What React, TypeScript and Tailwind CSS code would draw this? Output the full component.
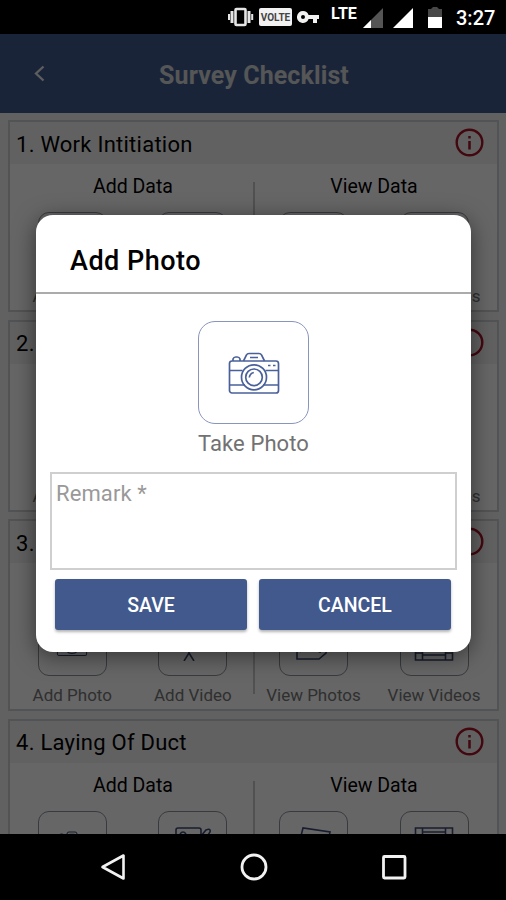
import type { ReactNode } from "react";

const sections = ["Work Intitiation", "Trenching", "Duct Inspection", "Laying Of Duct"];

export default function App() {
  return (
    <div className="flex h-[900px] w-[506px] flex-col overflow-hidden bg-black font-[Roboto,sans-serif]">
      <StatusBar />
      <main className="relative flex h-[800px] shrink-0 flex-col overflow-hidden bg-[#f3f3f3]">
        <Header />
        <div className="flex flex-col gap-[7.6px] pt-[7px] pr-[7px] pl-2">
          {sections.map((title, i) => (
            <SectionCard key={title} index={i + 1} title={title} />
          ))}
        </div>
        {/* Scrim and dialog sit over the list */}
        <div className="absolute inset-0 bg-black/60 pt-[181px] pl-[36px]">
          <PhotoDialog />
        </div>
      </main>
      <NavBar />
    </div>
  );
}

function StatusBar() {
  return (
    <div className="flex h-[34px] shrink-0 items-center bg-black pl-[227px] text-white">
      <svg width="27" height="22" viewBox="0 0 27 22" fill="none" stroke="#e6e6e6">
        <rect x="8.500" y="3" width="10" height="16" rx="1" strokeWidth="2.600" />
        <path d="M5 5v12M22 5v12" strokeWidth="3" />
        <path d="M2 8v6M25.200 8v6" strokeWidth="2" />
      </svg>
      <span className="ml-[5px] flex h-[18px] w-[33px] items-center justify-center rounded-[2px] bg-[#f2f2f2] text-[10px] font-bold text-[#444]">
        VOLTE
      </span>
      <svg className="ml-[5px]" width="24" height="14" viewBox="0 0 24 14" fill="#f2f2f2">
        <path
          fillRule="evenodd"
          d="M6 1a6 6 0 1 0 5.600 8H16v4h4V9h2V5H11.600A6 6 0 0 0 6 1Zm0 4a2 2 0 1 1 0 4 2 2 0 0 1 0-4Z"
        />
      </svg>
      <span className="mb-[7px] ml-[10px] w-[27px] text-[16px] leading-none font-bold">LTE</span>
      <svg className="mt-[3px] ml-[5px]" width="22" height="21" viewBox="0 0 22 21">
        <path d="M0 20 20 0v20Z" fill="#555" />
        <path d="M0 20 8 12v8Z" fill="#fff" />
      </svg>
      <svg className="mt-[3px] ml-[8px]" width="22" height="21" viewBox="0 0 22 21">
        <path d="M0 20 20 0v20Z" fill="#fff" />
      </svg>
      <svg className="ml-[13px]" width="14" height="22" viewBox="0 0 14 22">
        <path d="M0 3h3l2-2h4l2 2h3v9H0Z" fill="#484848" />
        <path d="M0 11h14v11H0Z" fill="#fff" />
      </svg>
      <span className="mt-[2px] ml-[14px] text-[20px] font-medium">3:27</span>
    </div>
  );
}

function Header() {
  return (
    <header className="flex h-[79px] shrink-0 items-center bg-[#435b90] text-[#e8eaea]">
      <svg className="ml-[33px]" width="14" height="18" viewBox="0 0 14 18" fill="none" stroke="currentColor" strokeWidth="2.300">
        <path d="M10.500 1.500 3 8.500l7.500 7" />
      </svg>
      <h1 className="mt-[4px] w-[414px] text-center text-[25px] font-bold tracking-[0.1px] text-[#d4d6d8]">
        Survey Checklist
      </h1>
    </header>
  );
}

function SectionCard({ index, title }: { index: number; title: string }) {
  return (
    <section className="relative h-[192px] shrink-0 border-2 border-[#cdcfd1] bg-white">
      <div className="flex h-[42px] items-center justify-between bg-[#f3f3f3] pr-[13px] pl-[6px]">
        <h2 className="mt-[2px] text-[22px] tracking-[0.25px] text-black">
          {index}. {title}
        </h2>
        <svg width="30" height="30" viewBox="0 0 30 30" fill="none" stroke="#a81226">
          <circle cx="15.500" cy="14.500" r="12.800" strokeWidth="2.400" />
          <path d="M15.500 13v8.500M15.500 8v2.500" strokeWidth="2.500" />
        </svg>
      </div>
      <div className="flex px-[2px]">
        <h3 className="mt-[9px] w-[242px] text-center text-[19.500px] leading-[28px] text-black">Add Data</h3>
        <h3 className="mt-[9px] w-[240px] text-center text-[19.500px] leading-[28px] text-black">View Data</h3>
      </div>
      <div className="mt-[11px] flex pl-[2px]">
        <Tile label="Add Photo">
          <CameraIcon className="h-[25px] w-[32px]" />
        </Tile>
        <Tile label="Add Video">
          <TripodIcon />
        </Tile>
        <Tile label="View Photos">
          <PhotosIcon />
        </Tile>
        <Tile label="View Videos">
          <FilmIcon />
        </Tile>
      </div>
      <div className="absolute top-[60px] left-[243px] h-[113px] w-[2px] bg-[#cbcbcb]" />
    </section>
  );
}

function Tile({ label, children }: { label: string; children: ReactNode }) {
  return (
    <div className="flex w-[120.600px] shrink-0 flex-col items-center">
      <div className="flex h-[65px] w-[69px] items-center justify-center rounded-[11px] border-[1.500px] border-[#8b939d] text-[#3b4a75]">
        {children}
      </div>
      <span className="mt-[7px] text-[17px] leading-[24px] whitespace-nowrap text-[#777]">{label}</span>
    </div>
  );
}

function PhotoDialog() {
  return (
    <div className="flex h-[437px] w-[435px] flex-col rounded-[17px] bg-white shadow-[0_4px_22px_rgba(0,0,0,0.5)]">
      <h2 className="flex h-[79px] shrink-0 items-center border-b-2 border-[#ababab] pt-[15px] pl-[34px] text-[27px] font-medium tracking-[0.5px] text-black">
        Add Photo
      </h2>
      <div className="mt-[27px] flex flex-col items-center">
        <div className="flex h-[103px] w-[111px] items-center justify-center rounded-[17px] border-[1.500px] border-[#8995bd] text-[#4a609a]">
          <CameraIcon className="h-[42px] w-[52px]" />
        </div>
        <span className="mt-[5px] text-[22px] leading-[30px] tracking-[0.1px] text-[#727272]">Take Photo</span>
      </div>
      <div className="mt-[13px] ml-[14px] h-[98px] w-[407px] border-2 border-[#cfcfcf] pt-[6px] pl-[4px] text-[22px] leading-[28px] tracking-[0.1px] text-[#999]">
        Remark *
      </div>
      <div className="mt-[9px] flex gap-3 pl-[19px]">
        <button className="h-[51px] w-[192px] rounded-[3px] bg-[#41598d] pt-[2px] text-[19.500px] font-medium text-white shadow-[0_2px_3px_rgba(0,0,0,0.3)]">
          SAVE
        </button>
        <button className="h-[51px] w-[192px] rounded-[3px] bg-[#41598d] pt-[2px] text-[19.500px] font-medium text-white shadow-[0_2px_3px_rgba(0,0,0,0.3)]">
          CANCEL
        </button>
      </div>
    </div>
  );
}

function CameraIcon({ className }: { className: string }) {
  return (
    <svg className={className} viewBox="0 0 52 42" fill="none" stroke="currentColor" strokeWidth="1.700">
      <rect x="1.500" y="9" width="49" height="32" rx="2.500" />
      <path d="M5 9V7a3 3 0 0 1 3-2h1a3 3 0 0 1 3 2v2M15.500 9l3-6q.7-1.500 2.500-1.500h10q1.800 0 2.500 1.500l3 6" />
      <path d="M22 5.500h8M1.500 18.500h13M37.500 18.500h13M1.500 33h15.500M35 33h15.500M40 13.500h2.500M45 13.500h2.500" />
      <circle cx="26" cy="25.300" r="12.500" />
      <circle cx="26" cy="25.300" r="8.300" />
      <path d="M21.300 25.500q.5-4 4.500-5" />
    </svg>
  );
}

function TripodIcon() {
  return (
    <svg width="40" height="34" viewBox="0 0 40 34" fill="none" stroke="currentColor" strokeWidth="1.600">
      <rect x="3" y="2" width="25" height="17" rx="2" />
      <path d="M28 10l5-6q5-2 4 2l-2 3v8l-7-3M7 8q3-4 6 0M16 19v7l-5 8M16 26l5 8" />
    </svg>
  );
}

function PhotosIcon() {
  return (
    <svg width="44" height="34" viewBox="0 0 44 34" fill="none" stroke="currentColor" strokeWidth="1.600">
      <path d="M10 10 12 2l27 4-4 20-7 6H6V10h23v16" />
      <path d="m9 25 7-8 5 6 3-3 4 5" />
    </svg>
  );
}

function FilmIcon() {
  return (
    <svg width="40" height="34" viewBox="0 0 40 34" fill="none" stroke="currentColor" strokeWidth="1.600">
      <path d="M1.500 2h37v31h-37ZM8.500 2v31M31.500 2v31M8.500 6h23M8.500 28h23M1.500 10h7M1.500 18h7M1.500 26h7M31.500 10h7M31.500 18h7M31.500 26h7" />
      <path d="m17 12 8 5-8 5Z" />
    </svg>
  );
}

function NavBar() {
  return (
    <nav className="flex h-[66px] shrink-0 items-center justify-between bg-black pr-[98px] pl-[99px]">
      <svg width="28" height="30" viewBox="0 0 28 30" fill="none" stroke="#f2f2f2" strokeWidth="2.600" strokeLinejoin="round">
        <path d="M3.500 15 24.500 3.500v23Z" />
      </svg>
      <svg width="28" height="28" viewBox="0 0 28 28" fill="none" stroke="#f2f2f2" strokeWidth="2.800">
        <circle cx="14" cy="14" r="12" />
      </svg>
      <svg width="28" height="28" viewBox="0 0 28 28" fill="none" stroke="#f2f2f2" strokeWidth="2.800">
        <rect x="3.500" y="3.500" width="21.500" height="21.500" rx="1" />
      </svg>
    </nav>
  );
}
